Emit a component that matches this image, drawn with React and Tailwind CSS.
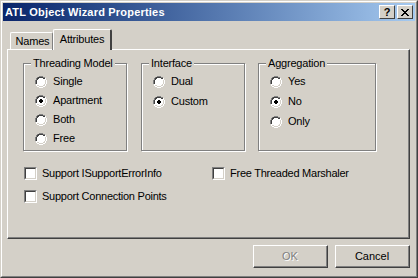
import React from 'react';

const font = { fontFamily: '"Liberation Sans", Arial, sans-serif' };

const Radio = ({ checked }) => (
  <svg width="12" height="12" viewBox="0 0 12 12" className="shrink-0">
    <path d="M4 0h4v1h2v1h1v2h1v4h-1v2h-1v1h-2v1h-4v-1h-2v-1h-1v-2h-1v-4h1v-2h1v-1h2z" fill="#ffffff" />
    <path d="M4 0h4v1h2v1h-2v-1h-4v1h-2v2h-1v4h-1v-4h1v-2h1v-1h2z" fill="#808080" />
    <path d="M4 1h4v1h2v1h-2v-1h-4v1h-1v1h-1v4h-1v-4h1v-2h1v-1z" fill="#404040" />
    <path d="M11 4h1v4h-1v2h-1v1h-2v1h-4v-1h-2v-1h2v1h4v-1h2v-2h1z" fill="#ffffff" />
    <path d="M10 4h1v4h-1v2h-2v1h-4v-1h-2v-1h2v1h4v-1h1v-1h1z" fill="#d4d0c8" />
    {checked && <path d="M5 4h2v1h1v2h-1v1h-2v-1h-1v-2h1z" fill="#000000" />}
  </svg>
);

const Check = () => (
  <div className="w-[13px] h-[13px] shrink-0 bg-white border-t border-l border-[#808080] border-r border-b border-r-white border-b-white">
    <div className="w-full h-full border-t border-l border-[#404040] border-r border-b border-r-[#d4d0c8] border-b-[#d4d0c8]" />
  </div>
);

const Option = ({ label, checked }) => (
  <div className="flex items-center gap-[6px] h-[13px]">
    <Radio checked={checked} />
    <span className="text-[11px] leading-none text-black tracking-[-0.2px]">{label}</span>
  </div>
);

const Group = ({ title, width, children, gaps }) => (
  <div
    className={`relative h-[88px] border border-[#808080] shadow-[inset_1px_1px_0_#ffffff,1px_1px_0_#ffffff] ${width}`}
  >
    <span className="absolute -top-[7px] left-[7px] px-[2px] bg-[#d4d0c8] text-[11px] leading-[13px] text-black tracking-[-0.2px]">
      {title}
    </span>
    <div className={`flex flex-col pl-[11px] pt-[11px] ${gaps}`}>{children}</div>
  </div>
);

const Button = ({ label, disabled }) => (
  <div className="w-[75px] h-[23px] bg-[#d4d0c8] border-t border-l border-white border-r border-b border-r-[#404040] border-b-[#404040]">
    <div className="w-full h-full flex items-center justify-center border-r border-b border-[#808080] border-t-0 border-l-0">
      <span
        className={`text-[11px] leading-none ${disabled ? 'text-[#808080] [text-shadow:1px_1px_0_#ffffff]' : 'text-black'}`}
      >
        {label}
      </span>
    </div>
  </div>
);

const CheckRow = ({ label }) => (
  <div className="flex items-center gap-[5px]">
    <Check />
    <span className="text-[11px] leading-none text-black tracking-[-0.25px]">{label}</span>
  </div>
);

export default function App() {
  return (
    <div style={font} className="w-[418px] h-[278px] bg-[#d4d0c8] border-t border-l border-[#d4d0c8] border-r border-b border-r-[#404040] border-b-[#404040]">
      <div className="w-full h-full border-t border-l border-white border-r border-b border-r-[#808080] border-b-[#808080] p-[1px]">
        {/* title bar */}
        <div className="h-[18px] flex items-center justify-between bg-gradient-to-r from-[#0a246a] to-[#a6caf0] pl-[2px] pr-[2px]">
          <span className="text-[11px] font-bold text-white leading-none tracking-[0.2px]">ATL Object Wizard Properties</span>
          <div className="flex gap-[2px]">
            <div className="w-[16px] h-[14px] bg-[#d4d0c8] border-t border-l border-white border-r border-b border-r-[#404040] border-b-[#404040] flex items-center justify-center">
              <span className="text-[11px] font-bold leading-none text-black">?</span>
            </div>
            <div className="w-[16px] h-[14px] bg-[#d4d0c8] border-t border-l border-white border-r border-b border-r-[#404040] border-b-[#404040] flex items-center justify-center">
              <svg width="8" height="7" viewBox="0 0 8 7">
                <path d="M0 0h2v1h1v1h2v-1h1v-1h2v1h-1v1h-1v1h-1v1h1v1h1v1h1v1h-2v-1h-1v-1h-2v1h-1v1h-2v-1h1v-1h1v-1h1v-1h-1v-1h-1v-1h-1z" fill="#000" />
              </svg>
            </div>
          </div>
        </div>

        {/* tabs */}
        <div className="pl-[4px] pr-[5px] pt-[6px]">
          <div className="flex items-end pl-[3px] h-[22px] relative z-10">
            <div className="h-[18px] w-[43px] -mb-[1px] flex items-center justify-center border-t border-l border-white border-r border-r-[#808080] rounded-t-[2px]">
              <span className="text-[11px] leading-none text-black tracking-[-0.2px] pl-[2px]">Names</span>
            </div>
            <div className="h-[21px] w-[59px] -mb-[1px] bg-[#d4d0c8] flex items-center justify-center border-t border-l border-white border-r-2 border-r-[#404040] rounded-t-[2px]">
              <span className="text-[11px] leading-none text-black -mt-[2px] tracking-[-0.2px]">Attributes</span>
            </div>
          </div>

          {/* panel */}
          <div className="h-[190px] border-t border-l border-white border-r border-b border-r-[#404040] border-b-[#404040]">
            <div className="h-full border-r border-b border-[#808080] border-t-0 border-l-0 pl-[15px] pt-[13px]">
              <div className="flex">
                <Group title="Threading Model" width="w-[104px]" gaps="gap-[6px]">
                  <Option label="Single" />
                  <Option label="Apartment" checked />
                  <Option label="Both" />
                  <Option label="Free" />
                </Group>
                <div className="w-[14px]" />
                <Group title="Interface" width="w-[104px]" gaps="gap-[7px]">
                  <Option label="Dual" />
                  <Option label="Custom" checked />
                </Group>
                <div className="w-[13px]" />
                <Group title="Aggregation" width="w-[118px]" gaps="gap-[7px]">
                  <Option label="Yes" />
                  <Option label="No" checked />
                  <Option label="Only" />
                </Group>
              </div>

              <div className="grid grid-cols-[188px_auto] gap-y-[10px] pt-[16px] pl-[1px]">
                <CheckRow label="Support ISupportErrorInfo" />
                <CheckRow label="Free Threaded Marshaler" />
                <CheckRow label="Support Connection Points" />
              </div>
            </div>
          </div>

          {/* buttons */}
          <div className="flex justify-end gap-[7px] pt-[6px]">
            <Button label="OK" disabled />
            <Button label="Cancel" />
          </div>
        </div>
      </div>
    </div>
  );
}
